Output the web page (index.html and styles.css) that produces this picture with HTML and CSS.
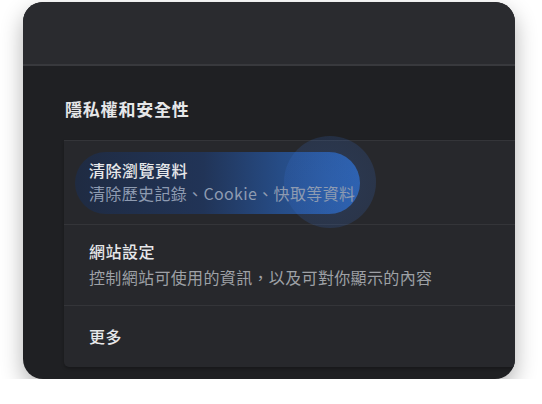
FILE: index.html
```html
<!DOCTYPE html>
<html lang="zh-Hant">
<head>
    <meta charset="UTF-8">
    <meta name="viewport" content="width=device-width, initial-scale=1.0">
    <title>隱私權和安全性</title>
    <link rel="stylesheet" href="styles.css">
</head>
<body>
    <div class="window">
        <div class="toolbar"></div>

        <div class="content">
            <h2 class="section-title">隱私權和安全性</h2>

            <div class="card">
                <div class="row row-first">
                    <div class="pill">
                        <span class="ripple"></span>
                        <div class="row-title">清除瀏覽資料</div>
                        <div class="row-desc">清除歷史記錄、Cookie、快取等資料</div>
                    </div>
                </div>

                <div class="row row-second">
                    <div class="row-title">網站設定</div>
                    <div class="row-desc">控制網站可使用的資訊，以及可對你顯示的內容</div>
                </div>

                <div class="row row-last">
                    <div class="row-title">更多</div>
                </div>
            </div>
        </div>
    </div>
</body>
</html>
```

FILE: styles.css
```css
/* Colours */
:root {
    --page-bg: #ffffff;
    --toolbar-bg: #2a2b2f;
    --toolbar-line: #38393d;
    --window-bg: #1f2023;
    --card-bg: #27282c;
    --card-line: #343539;
    --text-main: #e6e7e9;
    --text-sub: #9ea1a6;
}

body {
    margin: 0;
    padding: 2px 27px 0 23px;
    background: var(--page-bg);
    font-family: "Noto Sans CJK TC", "Noto Sans", sans-serif;
}

.window {
    height: 377px;
    background: var(--window-bg);
    border-radius: 20px;
    overflow: hidden;
    box-shadow: 0 9px 22px rgba(0, 0, 0, 0.3);
}

.toolbar {
    height: 62px;
    background: var(--toolbar-bg);
    border-bottom: 2px solid var(--toolbar-line);
}

.content {
    padding: 31px 0 0 41px;
}

.section-title {
    margin: 0 0 19px 1px;
    font-size: 17px;
    line-height: 24px;
    font-weight: 700;
    letter-spacing: 0.8px;
    color: var(--text-main);
}

.card {
    margin-right: -20px;
    background: var(--card-bg);
    border-top: 1px solid var(--card-line);
    border-radius: 0 0 0 5px;
    box-shadow: 0 2px 3px rgba(0, 0, 0, 0.25);
}

.row {
    border-bottom: 1px solid var(--card-line);
}

.row:last-child {
    border-bottom: none;
}

.row-first {
    padding: 11px 0 10px 11px;
}

.row-second {
    padding: 15px 0 17px 25px;
}

.row-last {
    padding: 19px 0 20px 25px;
}

.row-title {
    position: relative;
    font-size: 16px;
    line-height: 22px;
    font-weight: 500;
    letter-spacing: 0.5px;
    color: var(--text-main);
}

.row-desc {
    position: relative;
    margin-top: 4px;
    font-size: 16px;
    line-height: 22px;
    letter-spacing: 0.35px;
    color: var(--text-sub);
}

/* Highlighted item */
.pill {
    position: relative;
    display: inline-block;
    padding: 7px 5px 10px 14px;
    border-radius: 31px;
    background: linear-gradient(90deg, #1f2b42 0%, #213457 45%, #264c86 72%, #2b5ea8 100%);
}

.pill .row-desc {
    margin-top: 1px;
    color: #8e9bb1;
}

.ripple {
    position: absolute;
    left: 209px;
    top: -16px;
    width: 92px;
    height: 92px;
    border-radius: 50%;
    background: radial-gradient(circle, rgba(60, 120, 220, 0.22) 0%, rgba(56, 112, 210, 0.18) 72%, rgba(44, 90, 170, 0.15) 80%, rgba(44, 90, 170, 0.09) 100%);
}
```
